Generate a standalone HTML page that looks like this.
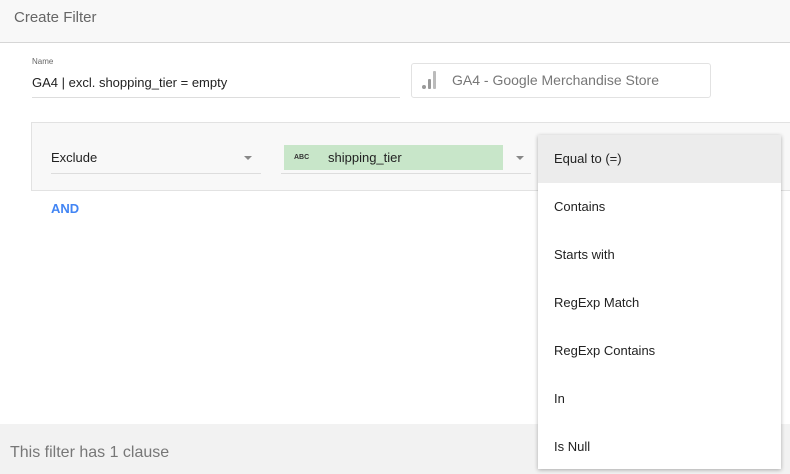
<!DOCTYPE html>
<html><head><style>
body{margin:0;width:790px;height:474px;position:relative;overflow:hidden;background:#fff;font-family:"Liberation Sans",Arial,sans-serif;}
.a{position:absolute}
.item{position:absolute;left:0;width:243px;height:48px;line-height:48px;padding-left:16px;box-sizing:border-box;font-size:13px;color:#222}
</style></head><body>
<div class="a" style="left:0;top:0;width:790px;height:42px;background:#f8f8f8;border-bottom:1px solid #d6d6d6"></div>
<div class="a" style="left:14px;top:9px;font-size:15px;color:#666">Create Filter</div>
<div class="a" style="left:32px;top:57px;font-size:8px;color:#666">Name</div>
<div class="a" style="left:32px;top:75px;font-size:13px;color:#222">GA4 | excl. shopping_tier = empty</div>
<div class="a" style="left:32px;top:97px;width:368px;height:1px;background:#ddd"></div>
<div class="a" style="left:411px;top:63px;width:298px;height:33px;border:1px solid #e2e2e2;border-radius:3px"></div>
<div class="a" style="left:422px;top:85px;width:4px;height:4px;border-radius:2px;background:#999"></div>
<div class="a" style="left:428px;top:79px;width:3px;height:10px;background:#999;border-radius:1px"></div>
<div class="a" style="left:433px;top:71px;width:3px;height:18px;background:#bbb;border-radius:1px"></div>
<div class="a" style="left:452px;top:72px;font-size:14px;color:#777">GA4 - Google Merchandise Store</div>
<div class="a" style="left:31px;top:122px;width:759px;height:67px;background:#f8f8f8;border:1px solid #e2e2e2;border-right:none"></div>
<div class="a" style="left:51px;top:150px;font-size:13px;color:#222">Exclude</div>
<div class="a" style="left:51px;top:173px;width:210px;height:1px;background:#ddd"></div>
<div class="a" style="left:244px;top:156px;border:4px solid transparent;border-top:4px solid #888"></div>
<div class="a" style="left:284px;top:145px;width:219px;height:25px;background:#c8e6c9"></div>
<div class="a" style="left:294px;top:154px;font-size:7px;font-weight:bold;color:#333">ABC</div>
<div class="a" style="left:328px;top:150px;font-size:13px;color:#222">shipping_tier</div>
<div class="a" style="left:281px;top:173px;width:250px;height:1px;background:#ddd"></div>
<div class="a" style="left:516px;top:156px;border:4px solid transparent;border-top:4px solid #888"></div>
<div class="a" style="left:51px;top:201px;font-size:13px;font-weight:bold;color:#4285f4">AND</div>
<div class="a" style="left:0;top:424px;width:790px;height:50px;background:#f2f2f2"></div>
<div class="a" style="left:10px;top:444px;font-size:16px;color:#777">This filter has 1 clause</div>
<div class="a" style="left:538px;top:135px;width:243px;height:334px;background:#fff;box-shadow:0 1px 4px rgba(0,0,0,.3)">
<div class="item" style="top:0;background:#ececec">Equal to (=)</div>
<div class="item" style="top:48px">Contains</div>
<div class="item" style="top:96px">Starts with</div>
<div class="item" style="top:144px">RegExp Match</div>
<div class="item" style="top:192px">RegExp Contains</div>
<div class="item" style="top:240px">In</div>
<div class="item" style="top:288px">Is Null</div>
</div>
</body></html>
